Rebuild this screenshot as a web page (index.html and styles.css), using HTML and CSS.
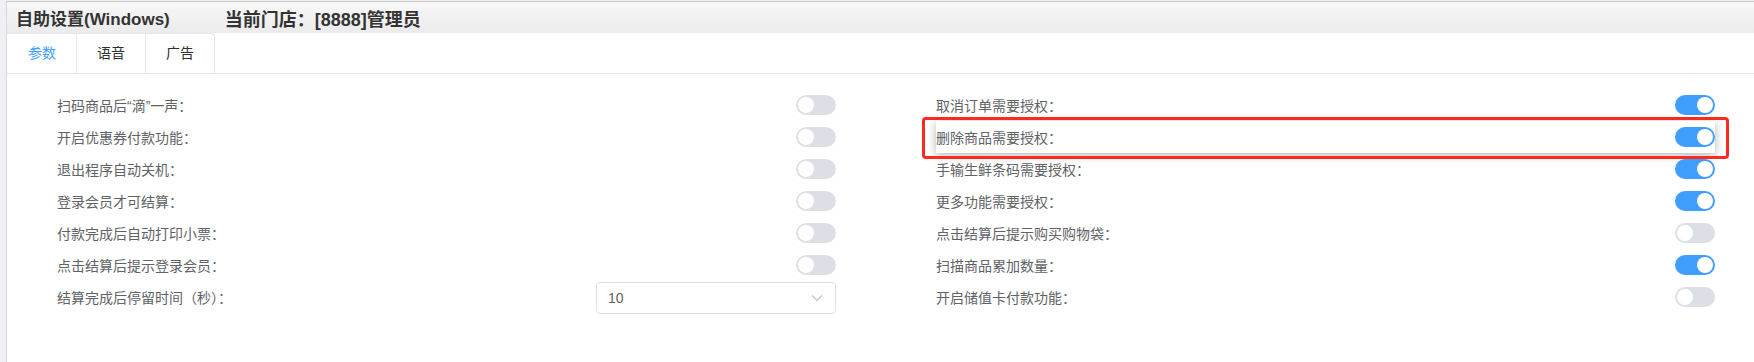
FILE: index.html
```html
<!DOCTYPE html>
<html lang="zh-CN">
<head>
    <meta charset="UTF-8">
    <title>自助设置</title>
    <link rel="stylesheet" href="styles.css">
</head>
<body>
    <div class="panel">
        <div class="panel-header">
            <span class="title">自助设置(Windows)</span>
            <span class="shop">当前门店：[8888]管理员</span>
        </div>

        <div class="tabs">
            <div class="tab-nav">
                <div class="tab active">参数</div>
                <div class="tab">语音</div>
                <div class="tab">广告</div>
            </div>
        </div>

        <div class="settings">
            <div class="column">
                <div class="row">
                    <span class="label">扫码商品后“滴”一声：</span>
                    <span class="switch"></span>
                </div>
                <div class="row">
                    <span class="label">开启优惠券付款功能：</span>
                    <span class="switch"></span>
                </div>
                <div class="row">
                    <span class="label">退出程序自动关机：</span>
                    <span class="switch"></span>
                </div>
                <div class="row">
                    <span class="label">登录会员才可结算：</span>
                    <span class="switch"></span>
                </div>
                <div class="row">
                    <span class="label">付款完成后自动打印小票：</span>
                    <span class="switch"></span>
                </div>
                <div class="row">
                    <span class="label">点击结算后提示登录会员：</span>
                    <span class="switch"></span>
                </div>
                <div class="row">
                    <span class="label">结算完成后停留时间（秒）：</span>
                    <div class="select">
                        <span>10</span>
                        <svg width="12" height="8" viewBox="0 0 12 8">
                            <polyline points="1,1.5 6,6.5 11,1.5" fill="none" stroke="#c0c4cc" stroke-width="1.2"/>
                        </svg>
                    </div>
                </div>
            </div>

            <div class="column">
                <div class="row">
                    <span class="label">取消订单需要授权：</span>
                    <span class="switch on"></span>
                </div>
                <div class="row highlight">
                    <span class="label">删除商品需要授权：</span>
                    <span class="switch on"></span>
                </div>
                <div class="row">
                    <span class="label">手输生鲜条码需要授权：</span>
                    <span class="switch on"></span>
                </div>
                <div class="row">
                    <span class="label">更多功能需要授权：</span>
                    <span class="switch on"></span>
                </div>
                <div class="row">
                    <span class="label">点击结算后提示购买购物袋：</span>
                    <span class="switch"></span>
                </div>
                <div class="row">
                    <span class="label">扫描商品累加数量：</span>
                    <span class="switch on"></span>
                </div>
                <div class="row">
                    <span class="label">开启储值卡付款功能：</span>
                    <span class="switch"></span>
                </div>
            </div>
        </div>
    </div>
</body>
</html>
```

FILE: styles.css
```css
body {
    margin: 0;
    padding: 1px 0 0 6px;
    height: 361px;
    overflow: hidden;
    background-color: #eff0f4;
    font-family: "Liberation Sans", "Noto Sans CJK SC", sans-serif;
    color: #606266;
    font-size: 14px;
}
.panel {
    background: #fff;
    border-top: 1px solid #c9c9c9;
    border-left: 1px solid #d6d8dc;
    height: 100%;
    width: 1900px;
}
.panel-header {
    height: 31px;
    display: flex;
    align-items: center;
    padding-left: 9px;
    background: linear-gradient(#f8f8f8, #ebebeb);
    font-size: 17px;
    font-weight: bold;
    color: #333;
}
.title {
    margin-right: 55px;
}
.shop {
    font-size: 18px;
}
.tabs {
    border-bottom: 1px solid #e4e7ed;
}
.tab-nav {
    display: flex;
    width: max-content;
    border: 1px solid #e4e7ed;
    border-bottom: none;
    border-left: none;
    border-radius: 0 4px 0 0;
}
.tab {
    height: 39px;
    line-height: 39px;
    padding: 0 20px;
    color: #303133;
    border-left: 1px solid #e4e7ed;
}
.tab:first-child {
    border-left: none;
    padding-left: 21px;
}
.tab.active {
    color: #409eff;
}
.settings {
    display: flex;
    gap: 100px;
    padding: 15px 0 0 50px;
}
.column {
    width: 779px;
}
.row {
    height: 32px;
    display: flex;
    align-items: center;
    justify-content: space-between;
}
.label {
    color: #606266;
}
.switch {
    position: relative;
    width: 40px;
    height: 20px;
    border-radius: 10px;
    background-color: #dcdfe6;
}
.switch::before {
    content: "";
    position: absolute;
    top: 2px;
    left: 2px;
    width: 16px;
    height: 16px;
    border-radius: 50%;
    background: #fff;
}
.switch.on {
    background-color: #409eff;
}
.switch.on::before {
    left: 22px;
}
.select {
    box-sizing: border-box;
    width: 240px;
    height: 32px;
    border: 1px solid #dcdfe6;
    border-radius: 4px;
    display: flex;
    align-items: center;
    justify-content: space-between;
    padding: 0 12px 0 11px;
    margin-top: 1px;
}
.highlight {
    position: relative;
    background: #fff;
    box-shadow: 0 2px 10px rgba(0, 0, 0, 0.3);
}
.highlight::after {
    content: "";
    position: absolute;
    top: -4px;
    bottom: -6px;
    left: -14px;
    right: -14px;
    border: 3px solid #fa2a1e;
    border-radius: 4px;
}
```
